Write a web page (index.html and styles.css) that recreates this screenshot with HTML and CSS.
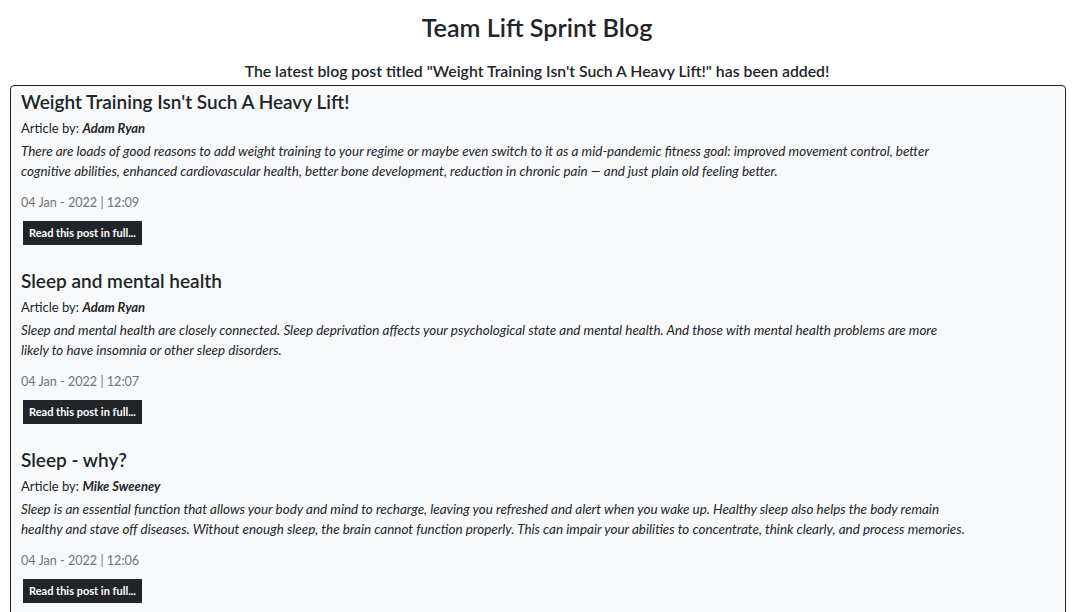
FILE: index.html
```html
<!DOCTYPE html>
<html lang="en">
<head>
<meta charset="utf-8">
<title>Team Lift Sprint Blog</title>
<link rel="stylesheet" href="styles.css">
</head>
<body>
<header class="page-head">
  <h1 class="site-title">Team Lift Sprint Blog</h1>
  <p class="notice">The latest blog post titled "Weight Training Isn't Such A Heavy Lift!" has been added!</p>
</header>
<main class="posts">
  <article class="post">
    <h2 class="post-title">Weight Training Isn't Such A Heavy Lift!</h2>
    <p class="byline">Article by: <em>Adam Ryan</em></p>
    <p class="summary">There are loads of good reasons to add weight training to your regime or maybe even switch to it as a mid-pandemic fitness goal: improved movement control, better cognitive abilities, enhanced cardiovascular health, better bone development, reduction in chronic pain — and just plain old feeling better.</p>
    <p class="date">04 Jan - 2022 | 12:09</p>
    <a class="btn" href="#">Read this post in full...</a>
  </article>
  <article class="post">
    <h2 class="post-title">Sleep and mental health</h2>
    <p class="byline">Article by: <em>Adam Ryan</em></p>
    <p class="summary">Sleep and mental health are closely connected. Sleep deprivation affects your psychological state and mental health. And those with mental health problems are more likely to have insomnia or other sleep disorders.</p>
    <p class="date">04 Jan - 2022 | 12:07</p>
    <a class="btn" href="#">Read this post in full...</a>
  </article>
  <article class="post">
    <h2 class="post-title">Sleep - why?</h2>
    <p class="byline">Article by: <em>Mike Sweeney</em></p>
    <p class="summary">Sleep is an essential function that allows your body and mind to recharge, leaving you refreshed and alert when you wake up. Healthy sleep also helps the body remain healthy and stave off diseases. Without enough sleep, the brain cannot function properly. This can impair your abilities to concentrate, think clearly, and process memories.</p>
    <p class="date">04 Jan - 2022 | 12:06</p>
    <a class="btn" href="#">Read this post in full...</a>
  </article>
</main>
</body>
</html>
```
FILE: styles.css
```css
* { box-sizing: border-box; }
html, body { margin: 0; padding: 0; }
body {
  font-family: Lato, "Open Sans", sans-serif;
  color: #212529;
  background: #fff;
}
.page-head {
  text-align: center;
  padding-top: 8px;
}
.site-title {
  margin: 0;
  font-size: 25.2px;
  font-weight: 600;
  line-height: 38px;
}
.notice {
  margin: 15px 0 0;
  font-size: 15.8px;
  font-weight: 600;
  line-height: 20px;
}
.posts {
  margin: 4px 8px 0 10px;
  border: 1px solid #212529;
  border-radius: 4px;
  background: #f8f9fa;
  padding: 2px 10px 20px 10px;
  min-height: 600px;
}
.post {
  margin-bottom: 22px;
}
.post-title {
  margin: 0;
  font-size: 19px;
  font-weight: 600;
  line-height: 28px;
}
.byline {
  margin: 2px 0 0;
  font-size: 13px;
  line-height: 20px;
}
.byline em { font-weight: 700; }
.summary {
  margin: 3px 0 0;
  max-width: 945px;
  font-size: 13.45px;
  font-style: italic;
  line-height: 20px;
}
.date {
  margin: 12px 0 0;
  font-size: 12.6px;
  line-height: 20px;
  color: #6c757d;
}
.btn {
  display: inline-block;
  margin: 8px 0 0 2px;
  padding: 0 6px;
  background: #212529;
  color: #fff;
  font-size: 11px;
  font-weight: 700;
  line-height: 24px;
  text-decoration: none;
}
```
